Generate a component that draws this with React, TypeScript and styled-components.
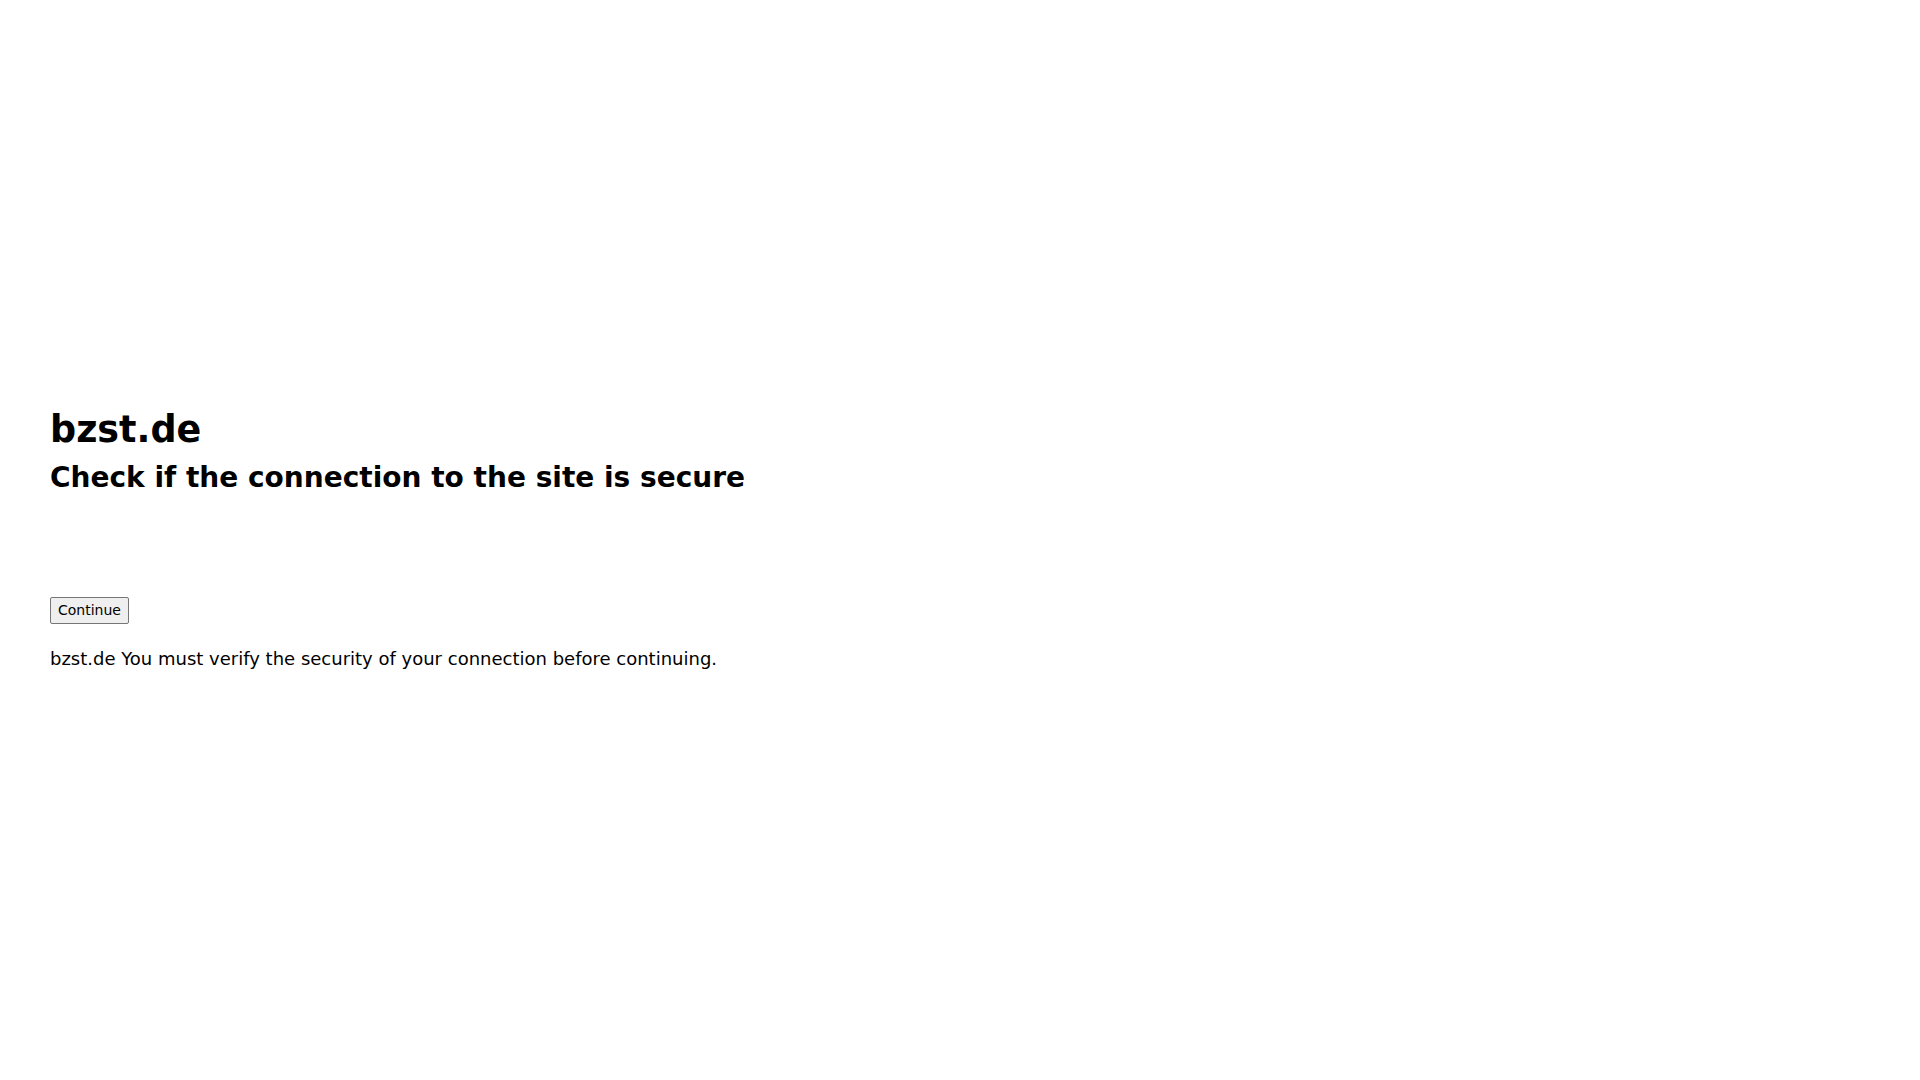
import styled, { createGlobalStyle } from "styled-components";

const GlobalStyle = createGlobalStyle`
  html, body {
    margin: 0;
    padding: 0;
    background: #fff;
    color: #000;
    font-family: "DejaVu Sans", sans-serif;
  }
`;

const Main = styled.main`
  padding: 403px 50px 0 50px;
`;

const SiteName = styled.h1`
  margin: 0;
  font-size: 36.5px;
  line-height: 54px;
  font-weight: 700;
`;

const Subtitle = styled.h2`
  margin: 0;
  font-size: 28px;
  line-height: 42px;
  font-weight: 700;
`;

const ChallengeArea = styled.div`
  height: 98px;
`;

const ContinueButton = styled.button`
  display: block;
  font-family: "DejaVu Sans", sans-serif;
  font-size: 14px;
  line-height: 18px;
  padding: 3px 7px 4px;
  border: 1px solid #767676;
  border-radius: 2px;
  background: #efefef;
  color: #000;
`;

const Notice = styled.p`
  margin: 21px 0 0 0;
  font-size: 18px;
  line-height: 27px;
`;

export default function App() {
  return (
    <>
      <GlobalStyle />
      <Main>
        <SiteName>bzst.de</SiteName>
        <Subtitle>Check if the connection to the site is secure</Subtitle>
        <ChallengeArea />
        <ContinueButton type="button">Continue</ContinueButton>
        <Notice>bzst.de You must verify the security of your connection before continuing.</Notice>
      </Main>
    </>
  );
}
